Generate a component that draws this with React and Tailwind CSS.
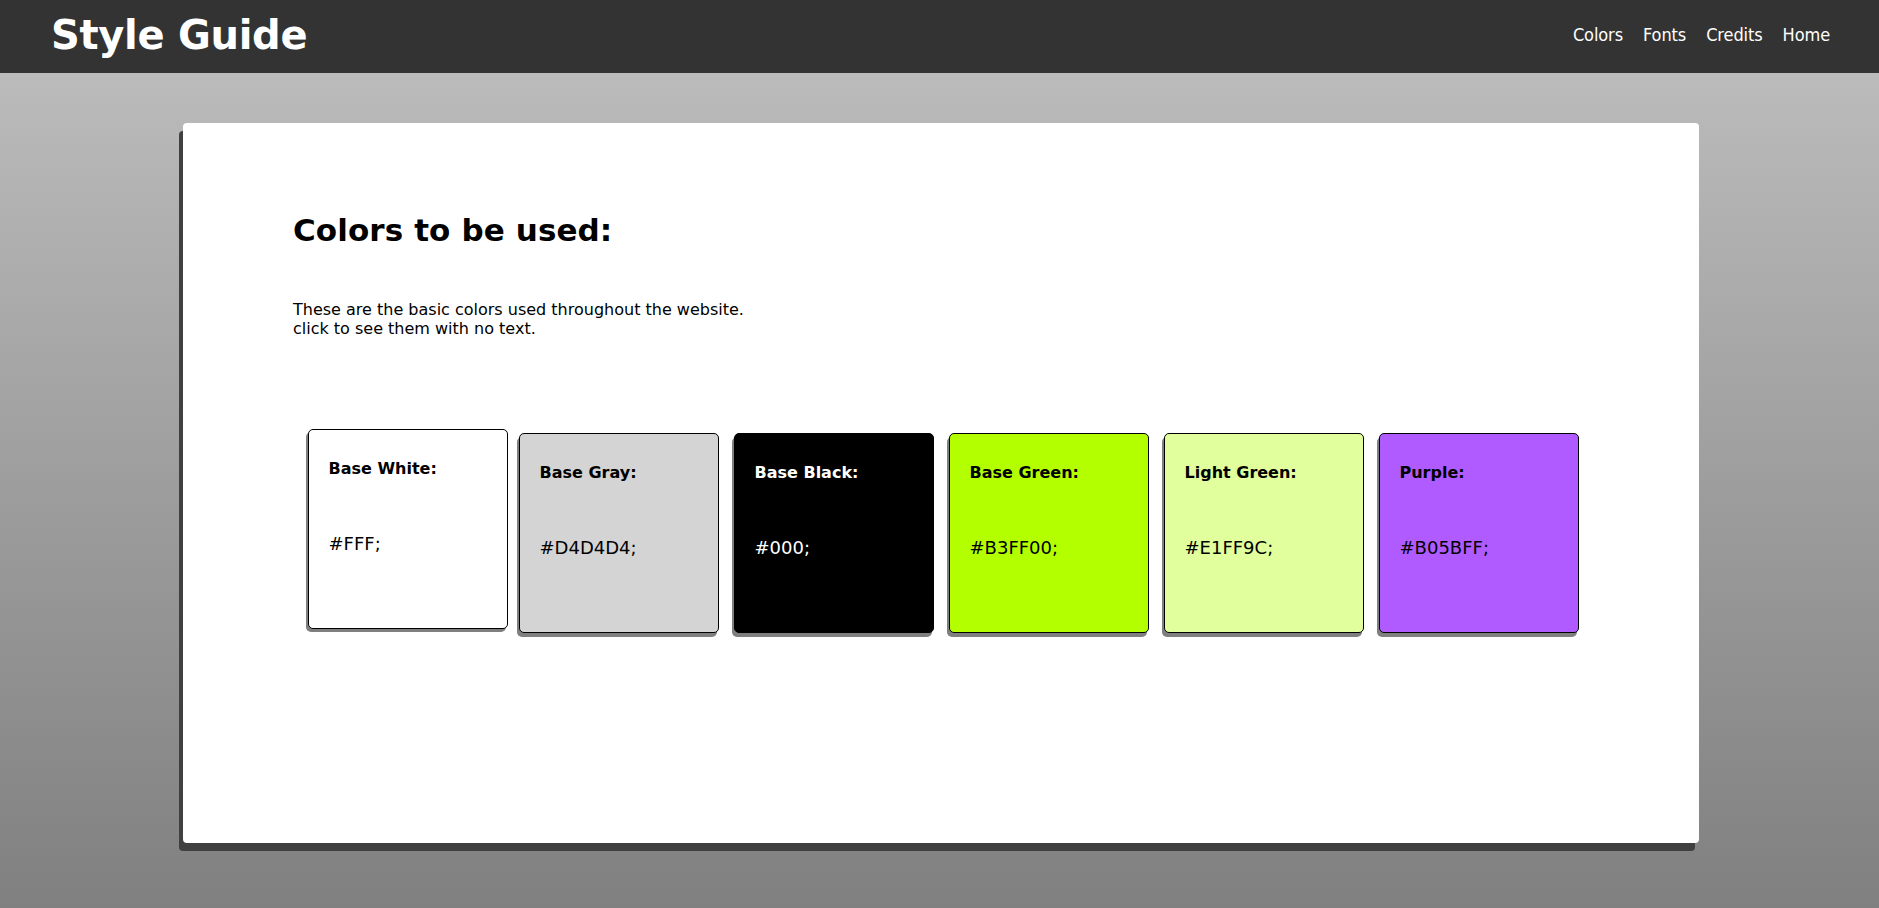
import React from "react";

// Swatches shown in the colour row
const swatches = [
  { name: "Base White:", code: "#FFF;", bg: "bg-[#ffffff]", text: "text-black", lifted: true },
  { name: "Base Gray:", code: "#D4D4D4;", bg: "bg-[#d4d4d4]", text: "text-black" },
  { name: "Base Black:", code: "#000;", bg: "bg-[#000000]", text: "text-white" },
  { name: "Base Green:", code: "#B3FF00;", bg: "bg-[#b3ff00]", text: "text-black" },
  { name: "Light Green:", code: "#E1FF9C;", bg: "bg-[#e1ff9c]", text: "text-black" },
  { name: "Purple:", code: "#B05BFF;", bg: "bg-[#b05bff]", text: "text-black" },
];

const navItems = ["Colors", "Fonts", "Credits", "Home"];

const Swatch = ({ item }) => (
  <div
    className={`${item.bg} ${item.text} ${
      item.lifted
        ? "translate-x-[4px] -translate-y-[4px] shadow-[-2px_3px_0_#7f7f7f]"
        : "shadow-[-2px_4px_0_#7f7f7f]"
    } w-[200px] h-[200px] shrink-0 border border-black rounded-[5px] pl-[20px] pt-[29px] cursor-pointer`}
  >
    <h3 className="text-[16px] leading-[19px] font-bold">{item.name}</h3>
    <p className="mt-[55px] text-[18px] leading-[21px]">{item.code}</p>
  </div>
);

export default function App() {
  return (
    <div className="min-h-screen flex flex-col font-['DejaVu_Sans',sans-serif]">
      {/* Top bar */}
      <header className="h-[73px] bg-[#333333] flex items-center justify-between pl-[51px] pr-[49px]">
        <h1 className="text-white font-bold text-[40px] leading-[46px] tracking-[-0.3px] -mt-[4px]">
          Style Guide
        </h1>
        <nav className="flex gap-[20px] -mt-[5px] font-['DejaVu_Sans_Condensed','DejaVu_Sans',sans-serif] font-stretch-condensed">
          {navItems.map((item) => (
            <a key={item} href="#" className="text-white text-[18px] leading-[21px] tracking-[-0.1px]">
              {item}
            </a>
          ))}
        </nav>
      </header>

      {/* Page body */}
      <main className="flex-1 min-h-[835px] bg-linear-to-b from-[#bbbbbb] to-[#808080] pt-[50px] pb-[65px]">
        <section className="ml-[183px] w-[1516px] h-[720px] bg-white rounded-[4px] shadow-[-4px_8px_0_#404040] pt-[87px]">
          <div className="pl-[110px]">
            <h2 className="text-[31px] leading-[40px] font-bold text-black tracking-[0.1px]">Colors to be used:</h2>
            <p className="mt-[50px] text-[16px] leading-[19px] text-black">
              These are the basic colors used throughout the website.
              <br />
              click to see them with no text.
            </p>
          </div>
          <div className="mt-[95px] flex justify-center gap-[15px]">
            {swatches.map((item) => (
              <Swatch key={item.name} item={item} />
            ))}
          </div>
        </section>
      </main>
    </div>
  );
}
